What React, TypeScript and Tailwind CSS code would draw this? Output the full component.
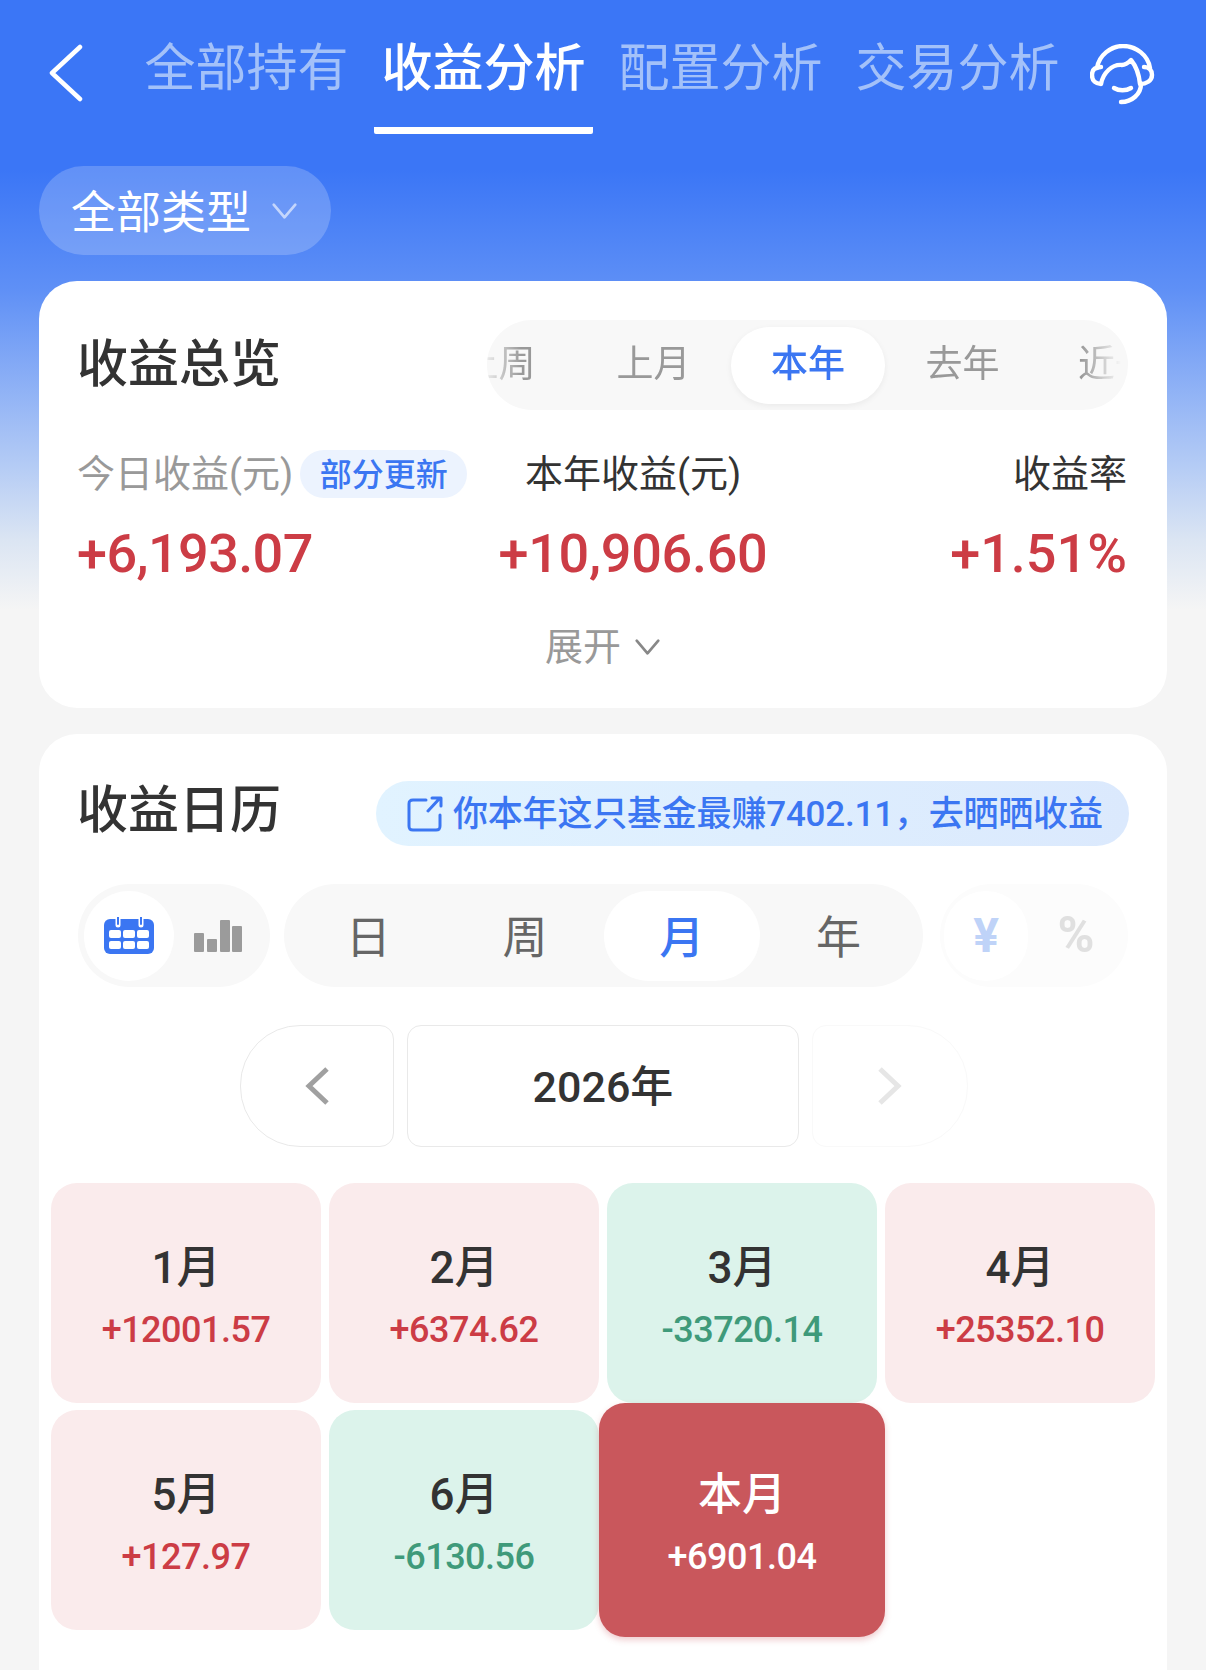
import React from "react";

const font = "font-['Roboto','Noto_Sans_CJK_SC',sans-serif]";

const months = [
  { label: "1月", value: "+12001.57", up: true },
  { label: "2月", value: "+6374.62", up: true },
  { label: "3月", value: "-33720.14", up: false },
  { label: "4月", value: "+25352.10", up: true },
  { label: "5月", value: "+127.97", up: true },
  { label: "6月", value: "-6130.56", up: false },
];

function ChevronDown({ className }: { className?: string }) {
  return (
    <svg viewBox="0 0 28 20" fill="none" stroke="currentColor" strokeLinecap="round" strokeLinejoin="round" className={className}>
      <path d="M2 3 L14 17 L26 3" strokeWidth="3" />
    </svg>
  );
}

function ChevronSide({ dir, className }: { dir: "left" | "right"; className?: string }) {
  return (
    <svg viewBox="0 0 24 38" fill="none" stroke="currentColor" strokeLinejoin="miter" className={className}>
      <path d={dir === "left" ? "M22 2 L4 19 L22 36" : "M2 2 L20 19 L2 36"} strokeWidth="5" />
    </svg>
  );
}

function BackIcon() {
  return (
    <svg viewBox="0 0 36 58" fill="none" stroke="white" strokeWidth="4.5" strokeLinecap="round" strokeLinejoin="round" className="mt-[2px] h-[58px] w-[36px]">
      <path d="M32 3 L4 29 L32 55" />
    </svg>
  );
}

function Headset() {
  return (
    <svg viewBox="0 0 70 62" fill="none" stroke="white" strokeWidth="4.4" strokeLinecap="round" strokeLinejoin="round" className="h-[62px] w-[70px]">
      <path d="M7 24 C9 11 21 2 33 2 C46 2 58 11 60 24" />
      <path d="M11 23 C5 23 2 26 2 31 C2 37 6 40 11 40 C13 29 22 20 32 21 C36 21 39 18 41 16 C46 22 49 30 50 40 C56 40 62 37 62 31 C62 26 59 23 54 23" />
      <path d="M51 40 C51 50 42 58 31 58" />
      <path d="M24 44 C29 47 36 47 41 44" />
    </svg>
  );
}

function CalendarIcon() {
  return (
    <svg viewBox="0 0 50 37" className="h-[37px] w-[50px]">
      <rect x="0" y="2" width="50" height="35" rx="6" fill="#3b76f2" />
      <path d="M14 0 V8 M37 0 V8" stroke="white" strokeWidth="5" strokeLinecap="round" />
      <path d="M14 0 V7 M37 0 V7" stroke="#3b76f2" strokeWidth="2" strokeLinecap="round" />
      {[5, 19, 33].map((x) =>
        [13, 24].map((y) => <rect key={`${x}-${y}`} x={x} y={y} width="12" height="8" rx="2" fill="white" />),
      )}
    </svg>
  );
}

function BarsIcon() {
  return (
    <svg viewBox="0 0 48 32" className="h-[32px] w-[48px]" fill="#9b9b9b">
      <rect x="0" y="13" width="10" height="19" rx="1" />
      <rect x="13" y="19" width="10" height="13" rx="1" />
      <rect x="26" y="0" width="10" height="32" rx="1" />
      <rect x="38" y="6" width="10" height="26" rx="1" />
    </svg>
  );
}

function ShareIcon() {
  return (
    <svg viewBox="0 0 36 36" fill="none" stroke="#3b76f2" strokeWidth="3" strokeLinecap="round" strokeLinejoin="round" className="h-[36px] w-[36px]">
      <path d="M19 4 H6 C3 4 2 5 2 8 V30 C2 33 3 34 6 34 H29 C32 34 33 33 33 30 V19" />
      <path d="M21 15 L33 2 M25 2 H34 V10" />
    </svg>
  );
}

export default function App() {
  return (
    <div className={`${font} h-[1670px] w-[1206px] overflow-hidden bg-[linear-gradient(180deg,#3b76f6_0px,#3b76f6_170px,#5f90f6_290px,#b5ccf5_467px,#dbe5f3_540px,#f5f5f5_610px)]`}>
      <header className="flex h-[134px] items-start pl-[48px] pt-[42px]">
        <BackIcon />
        <nav className="ml-[53px] flex gap-[18px] pt-[2px]">
          {["全部持有", "收益分析", "配置分析", "交易分析"].map((t) => {
            const on = t === "收益分析";
            return (
              <div key={t} className={`flex h-[90px] w-[219px] flex-col items-center border-b-[7px] text-[51px] leading-[50px] ${on ? "rounded-b-[2px] border-white font-medium text-white" : "border-transparent text-[#a3c1f9]"}`}>
                {t}
              </div>
            );
          })}
        </nav>
        <div className="ml-[23px] mt-[2px]">
          <Headset />
        </div>
      </header>

      <div className="ml-[39px] mt-[32px] flex h-[89px] w-[292px] items-center rounded-full bg-white/20 pl-[32px] text-[45px] text-white">
        <span className="pt-[6px] leading-[60px]">全部类型</span>
        <ChevronDown className="ml-[20px] h-[18px] w-[27px] text-white/60" />
      </div>

      {/* 收益总览 */}
      <section className="ml-[39px] mt-[26px] h-[427px] w-[1128px] rounded-[38px] bg-white px-[40px] pt-[39px]">
        <div className="flex items-center justify-between">
          <h2 className="-ml-[2px] text-[51px] font-medium leading-[90px] text-[#333333]">收益总览</h2>
          <div className="-mr-[1px] h-[90px] w-[641px] overflow-hidden rounded-full bg-[#f8f8f8]">
            <div className="-ml-[66px] flex h-full w-[780px] items-center whitespace-nowrap text-[37px] text-[#999999] [mask-image:linear-gradient(90deg,transparent_60px,black_100px,black_660px,transparent_700px)]">
              <span className="w-[155px] shrink-0 text-center">上周</span>
              <span className="w-[155px] shrink-0 text-center">上月</span>
              <span className="flex h-[77px] w-[154px] shrink-0 items-center justify-center rounded-full bg-white font-medium text-[#3b76f2] shadow-[0_2px_6px_rgba(0,0,0,0.06)]">本年</span>
              <span className="w-[155px] shrink-0 text-center">去年</span>
              <span className="w-[155px] shrink-0 pl-[38px]">近一年</span>
            </div>
          </div>
        </div>

        <div className="mt-[39px] flex items-start">
          <div className="w-[420px]">
            <div className="-ml-[2px] flex h-[50px] items-center text-[38px] text-[#999999]">
              今日收益(元)
              <span className="ml-[7px] flex h-[48px] w-[167px] items-center justify-center rounded-full bg-[#ecf3fe] pt-[2px] text-[32px] font-medium text-[#3b76f2]">部分更新</span>
            </div>
            <div className="-ml-[2px] mt-[24px] text-[54px] font-medium leading-[62px] tracking-[-0.6px] text-[#cc3c45]">+6,193.07</div>
          </div>
          <div className="flex w-[268px] flex-col items-center">
            <div className="flex h-[50px] items-center text-[38px] text-[#333333]">本年收益(元)</div>
            <div className="mt-[24px] text-[54px] font-medium leading-[62px] tracking-[-0.3px] text-[#cc3c45]">+10,906.60</div>
          </div>
          <div className="flex flex-1 flex-col items-end">
            <div className="flex h-[50px] items-center text-[38px] text-[#333333]">收益率</div>
            <div className="mt-[24px] text-[54px] font-medium leading-[62px] text-[#cc3c45]">+1.51%</div>
          </div>
        </div>

        <div className="mt-[37px] flex items-center justify-center text-[38px] leading-[50px] text-[#999999]">
          展开
          <ChevronDown className="ml-[13px] h-[18px] w-[27px] text-[#888888]" />
        </div>
      </section>

      {/* 收益日历 */}
      <section className="ml-[39px] mt-[26px] h-[1000px] w-[1128px] rounded-[38px] bg-white pt-[47px]">
        <div className="flex h-[65px] items-center justify-between px-[40px]">
          <h2 className="-ml-[2px] mb-[6px] text-[51px] font-medium leading-[65px] text-[#333333]">收益日历</h2>
          <div className="-mr-[2px] flex h-[65px] w-[753px] items-center rounded-full bg-[linear-gradient(90deg,#e1f3ff,#dbe9fd)] pl-[31px] text-[35px] font-medium text-[#3b76f2]">
            <ShareIcon />
            <span className="ml-[10px] whitespace-nowrap pt-[4px] tracking-[-0.2px]">你本年这只基金最赚7402.11，去晒晒收益</span>
          </div>
        </div>

        <div className="mt-[38px] flex items-center px-[39px]">
          <div className="flex h-[103px] w-[192px] items-center rounded-full bg-[#f8f8f8] pl-[6px]">
            <div className="flex h-[90px] w-[90px] items-center justify-center rounded-full bg-white">
              <CalendarIcon />
            </div>
            <div className="ml-[20px]">
              <BarsIcon />
            </div>
          </div>
          <div className="ml-[14px] grid h-[103px] w-[639px] grid-cols-4 items-center rounded-full bg-[#f8f8f8] px-[6px] text-[45px] leading-[60px] text-[#666666]">
            <span className="pt-[6px] text-center">日</span>
            <span className="pt-[6px] text-center">周</span>
            <span className="flex h-[90px] items-center justify-center rounded-full bg-white pt-[6px] font-medium text-[#3b76f2]">月</span>
            <span className="pt-[6px] text-center">年</span>
          </div>
          <div className="ml-[17px] flex h-[103px] w-[188px] items-center rounded-full bg-[#fcfcfc] pl-[4px] font-bold">
            <div className="flex h-[90px] w-[84px] items-center justify-center rounded-full bg-white text-[48px] text-[#bfd3f8]">¥</div>
            <div className="ml-[6px] w-[84px] text-center text-[50px] text-[#e0e0e0]">%</div>
          </div>
        </div>

        <div className="ml-[201px] mt-[38px] flex h-[122px] gap-[13px]">
          <div className="flex w-[154px] items-center justify-center rounded-l-[60px] rounded-r-[14px] border border-[#e9e9e9]">
            <ChevronSide dir="left" className="h-[38px] w-[24px] text-[#a0a0a0]" />
          </div>
          <div className="flex w-[392px] items-center justify-center rounded-[14px] border border-[#e9e9e9] pt-[3px] text-[43px] font-medium text-[#333333]">
            2026年
          </div>
          <div className="flex w-[156px] items-center justify-center rounded-l-[14px] rounded-r-[60px] border border-[#f9f9f9]">
            <ChevronSide dir="right" className="h-[38px] w-[24px] text-[#e6e6e6]" />
          </div>
        </div>

        <div className="ml-[12px] mt-[36px] grid w-[1104px] grid-cols-4 gap-x-[8px] gap-y-[7px]">
          {months.map((m) => (
            <div key={m.label} className={`flex h-[220px] flex-col items-center rounded-[26px] pt-[60px] ${m.up ? "bg-[#faebec]" : "bg-[#dcf3eb]"}`}>
              <div className="text-[44px] font-medium leading-[50px] text-[#333333]">{m.label}</div>
              <div className={`mt-[15px] text-[36px] font-medium leading-[44px] tracking-[-0.5px] ${m.up ? "text-[#cc3c45]" : "text-[#3f9a7a]"}`}>{m.value}</div>
            </div>
          ))}
          <div className="relative z-10 -mx-[8px] -mb-[6px] -mt-[7px] flex h-[234px] flex-col items-center rounded-[26px] bg-[#c9575c] pt-[67px] shadow-[0_3px_6px_rgba(201,87,92,0.3)]">
            <div className="text-[44px] font-medium leading-[50px] text-white">本月</div>
            <div className="mt-[15px] text-[36px] font-medium leading-[44px] tracking-[-0.5px] text-white">+6901.04</div>
          </div>
        </div>
      </section>
    </div>
  );
}
